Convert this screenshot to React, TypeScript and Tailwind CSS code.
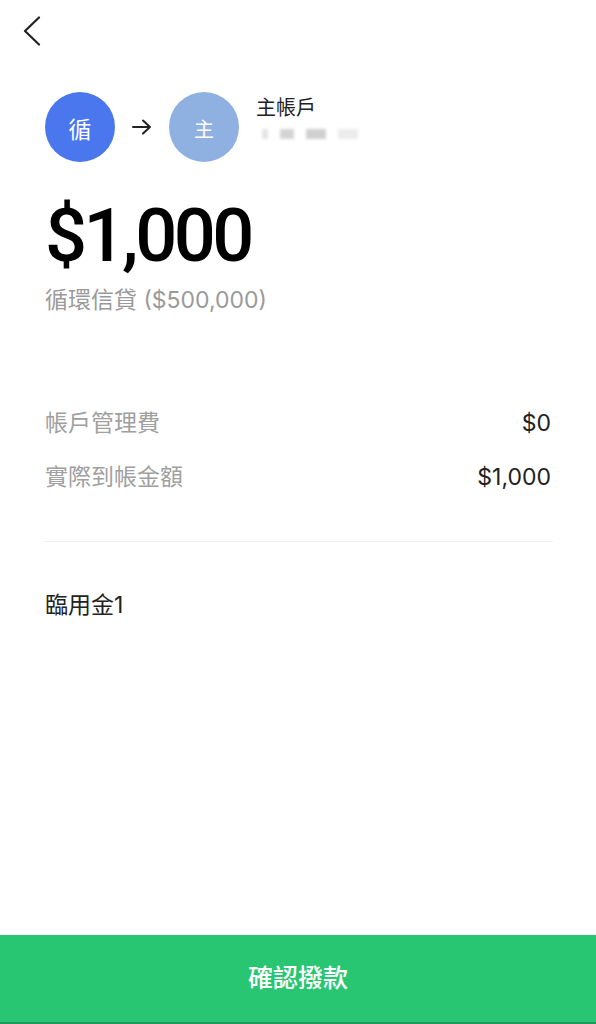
import React from 'react';

const font = { fontFamily: 'Roboto, "Noto Sans CJK TC", sans-serif' };

function BlurredAccount() {
  // masked account number, shown as blurred blocks
  const blocks = [
    { w: 'w-[6px]', c: 'bg-[#e4e4e4]' },
    { w: 'w-[14px]', c: 'bg-[#d4d4d4]' },
    { w: 'w-[20px]', c: 'bg-[#d0d0d0]' },
    { w: 'w-[20px]', c: 'bg-[#ececec]' },
  ];
  return (
    <div className="flex items-center gap-[12px] pl-[6px] mt-[9px] blur-[1.5px]">
      {blocks.map((b, i) => (
        <div key={i} className={`h-[10px] ${b.w} ${b.c}`} />
      ))}
    </div>
  );
}

export default function App() {
  return (
    <div className="w-[596px] h-[1024px] bg-white flex flex-col font-['Inter','Noto_Sans_CJK_TC',sans-serif]">
      <div className="flex-1 flex flex-col">
        <div className="h-[62px] pl-[22px] pt-[16px]">
          <svg width="20" height="30" viewBox="0 0 20 30" fill="none">
            <path d="M17 1.5 L3 15 L17 28.5" stroke="#222" strokeWidth="2.2" strokeLinecap="round" strokeLinejoin="round" />
          </svg>
        </div>

        <div className="flex items-center px-[45px] mt-[30px]">
          <div className="w-[70px] h-[70px] rounded-full bg-[#4b77ee] flex items-center justify-center text-white text-[23px] pt-[6px]">
            循
          </div>
          <svg className="mx-[17px]" width="20" height="16" viewBox="0 0 20 16" fill="none">
            <path d="M1 8 H18 M11 1.5 L18 8 L11 14.5" stroke="#222" strokeWidth="2" strokeLinecap="round" strokeLinejoin="round" />
          </svg>
          <div className="w-[70px] h-[70px] rounded-full bg-[#8fb1e1] flex items-center justify-center text-white text-[20px] pt-[6px]">
            主
          </div>
          <div className="ml-[17px] -mt-[20px] flex flex-col">
            <div className="text-[20px] leading-[24px] text-[#222]">主帳戶</div>
            <BlurredAccount />
          </div>
        </div>

        <div className="px-[45px] mt-[34px]">
          <div className="text-[74px] leading-[80px] font-medium text-black tracking-[-3.5px]" style={font}>$1,000</div>
          <div className="text-[23px] leading-[30px] text-[#9a9a9a] mt-[9px]">循環信貸 ($500,000)</div>
        </div>

        <div className="px-[45px] mt-[93px] flex flex-col gap-[24px]">
          <div className="flex justify-between items-center text-[23px] leading-[30px]">
            <span className="text-[#a0a0a0]">帳戶管理費</span>
            <span className="text-[#222]">$0</span>
          </div>
          <div className="flex justify-between items-center text-[23px] leading-[30px]">
            <span className="text-[#a0a0a0]">實際到帳金額</span>
            <span className="text-[#222]">$1,000</span>
          </div>
        </div>

        <div className="mx-[43px] mt-[49px] h-px bg-[#f0f0f0]" />

        <div className="px-[45px] mt-[48px] text-[23px] leading-[30px] text-[#222]">臨用金1</div>
      </div>

      <button className="h-[89px] w-full bg-[#28c673] border-b-2 border-[#1f9a59] text-white text-[25px] font-medium flex items-center justify-center">
        確認撥款
      </button>
    </div>
  );
}
